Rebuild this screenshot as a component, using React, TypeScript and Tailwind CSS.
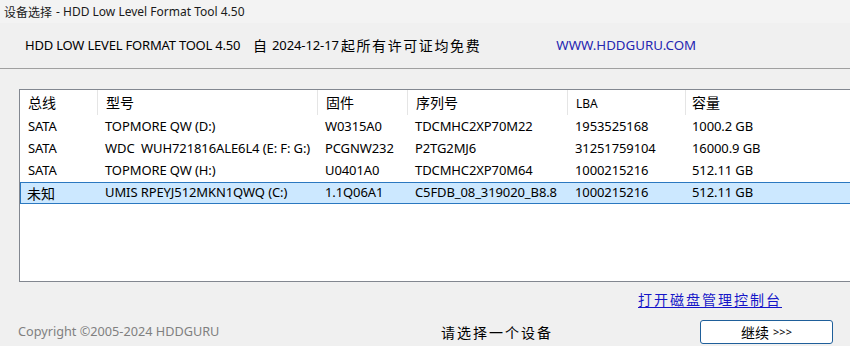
import React from "react";

const rows = [
  { bus: "SATA", model: "TOPMORE QW (D:)", fw: "W0315A0", sn: "TDCMHC2XP70M22", lba: "1953525168", cap: "1000.2 GB" },
  { bus: "SATA", model: "WDC  WUH721816ALE6L4 (E: F: G:)", fw: "PCGNW232", sn: "P2TG2MJ6", lba: "31251759104", cap: "16000.9 GB" },
  { bus: "SATA", model: "TOPMORE QW (H:)", fw: "U0401A0", sn: "TDCMHC2XP70M64", lba: "1000215216", cap: "512.11 GB" },
  { bus: "未知", model: "UMIS RPEYJ512MKN1QWQ (C:)", fw: "1.1Q06A1", sn: "C5FDB_08_319020_B8.8", lba: "1000215216", cap: "512.11 GB", selected: true },
];

const cols = ["w-[78px]", "w-[220px]", "w-[90px]", "w-[160px]", "w-[118px]", "flex-1"];

export default function App() {
  const ui = { fontFamily: '"Noto Sans", "Open Sans", "Noto Sans CJK SC", sans-serif' };
  const cjk = { fontFamily: '"Noto Sans CJK SC", "Noto Sans", sans-serif' };
  return (
    <div className="h-[346px] w-[850px] overflow-hidden bg-[#f0f0f0] text-black" style={ui}>
      <div className="flex h-[23px] items-center bg-[#f3f3f3] pl-[4px] text-[12px] text-[#1a1a1a]">
        <span style={cjk}>设备选择</span>
        <span className="ml-[4px]">- HDD Low Level Format Tool 4.50</span>
      </div>

      <div className="flex h-[45px] items-center pl-[25px] text-[13px]">
        <span className="w-[228px] tracking-[-0.2px]">HDD LOW LEVEL FORMAT TOOL 4.50</span>
        <span className="text-[14px]" style={cjk}>自</span>
        <span className="ml-[5px] tracking-[-0.1px]">2024-12-17</span>
        <span className="ml-[2px] text-[14px] tracking-[1.6px]" style={cjk}>起所有许可证均免费</span>
        <span className="ml-[75px] text-[13.3px] text-[#2626b0]">WWW.HDDGURU.COM</span>
      </div>

      <div className="border-t border-[#a0a0a0]" />

      <div className="ml-[19px] mt-[20px] h-[193px] w-[840px] border border-[#828790] bg-white">
        <div className="flex h-[25px] items-center text-[14px]" style={cjk}>
          {["总线", "型号", "固件", "序列号"].map((h, i) => (
            <div key={h} className={`${cols[i]} h-full border-r border-[#e5e5e5] pl-[8px] leading-[25px]`}>{h}</div>
          ))}
          <div className={`${cols[4]} h-full border-r border-[#e5e5e5] pl-[8px] text-[12px] leading-[27px]`} style={ui}>LBA</div>
          <div className={`${cols[5]} h-full pl-[6px] leading-[25px]`}>容量</div>
        </div>
        <div className="pt-[1px]">
          {rows.map((r) => (
            <div
              key={r.sn}
              className={`flex h-[22px] items-center text-[13px] tracking-[-0.1px] ${r.selected ? "border border-[#2b78c0] bg-[#cce8ff]" : "border border-transparent"}`}
            >
              <div className={`${cols[0]} ${r.selected ? "pl-[6px] text-[14px]" : "pl-[7px]"}`} style={r.selected ? cjk : undefined}>{r.bus}</div>
              <div className={`${cols[1]} whitespace-pre pl-[6px]`}>{r.model}</div>
              <div className={`${cols[2]} pl-[6px]`}>{r.fw}</div>
              <div className={`${cols[3]} pl-[6px]`}>{r.sn}</div>
              <div className={`${cols[4]} pl-[6px]`}>{r.lba}</div>
              <div className={`${cols[5]} pl-[5px]`}>{r.cap}</div>
            </div>
          ))}
        </div>
      </div>

      <div className="flex h-[28px] items-end pl-[638px]">
        <a className="text-[14px] tracking-[2px] text-[#1515c8] underline underline-offset-[2px]" style={cjk}>
          打开磁盘管理控制台
        </a>
      </div>

      <div className="mt-[10px] flex items-center">
        <span className="ml-[18px] w-[423px] text-[12.7px] text-[#808080]">Copyright ©2005-2024 HDDGURU</span>
        <span className="w-[259px] text-[14px] tracking-[2px]" style={cjk}>请选择一个设备</span>
        <button className="flex h-[24px] w-[133px] items-center justify-center rounded-[3px] border border-[#1f5f9a] bg-white text-[14px]">
          <span style={cjk}>继续</span>
          <span className="ml-[4px] text-[11px]">&gt;&gt;&gt;</span>
        </button>
      </div>
    </div>
  );
}
